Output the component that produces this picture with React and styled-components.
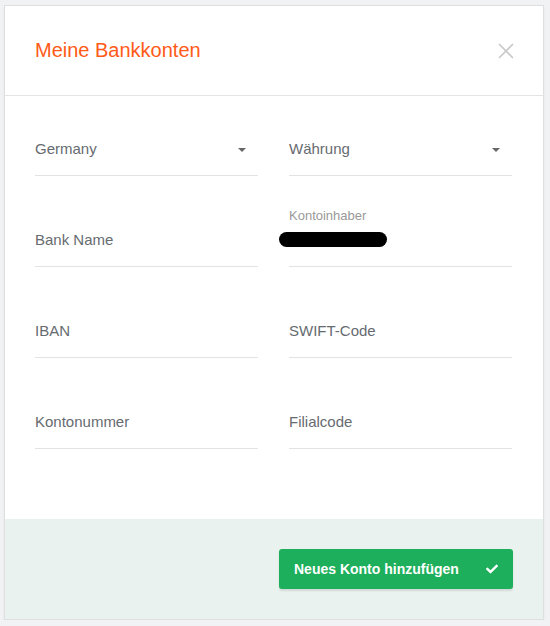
import React from "react";
import styled, { createGlobalStyle } from "styled-components";
import { FaCheck } from "react-icons/fa";

const GlobalStyle = createGlobalStyle`
  html, body {
    margin: 0;
    padding: 0;
    background: #f1f2f4;
    font-family: "Liberation Sans", Arial, sans-serif;
  }
  * { box-sizing: border-box; }
`;

const fields = [
  { label: "Germany", select: true },
  { label: "Währung", select: true },
  { label: "Bank Name" },
  { label: "Kontoinhaber", floating: true, redacted: true },
  { label: "IBAN" },
  { label: "SWIFT-Code" },
  { label: "Kontonummer" },
  { label: "Filialcode" },
];

const Field = ({ label, select, floating, redacted }) => (
  <StyledField>
    {floating && <StyledFloatingLabel>{label}</StyledFloatingLabel>}
    <StyledValueRow>
      {redacted ? <StyledRedacted /> : <StyledPlaceholder>{label}</StyledPlaceholder>}
      {select && <StyledCaret />}
    </StyledValueRow>
  </StyledField>
);

export default function App() {
  return (
    <>
      <GlobalStyle />
      <StyledCard>
        <StyledHeader>
          <StyledTitle>Meine Bankkonten</StyledTitle>
          <StyledClose aria-label="close">
            <svg width="16" height="16" viewBox="0 0 16 16">
              <path d="M1 1L15 15M15 1L1 15" stroke="#c8c8c8" strokeWidth="1.6" fill="none" />
            </svg>
          </StyledClose>
        </StyledHeader>
        <StyledBody>
          {fields.map((f) => (
            <Field key={f.label} {...f} />
          ))}
        </StyledBody>
        <StyledFooter>
          <StyledButton>
            Neues Konto hinzufügen
            <FaCheck size={12} />
          </StyledButton>
        </StyledFooter>
      </StyledCard>
    </>
  );
}

const StyledCard = styled.div`
  width: 540px;
  margin: 5px 0 0 4px;
  background: #fff;
  border: 1px solid #dedfe1;
  box-shadow: 0 2px 2px rgba(0, 0, 0, 0.06);
`;

const StyledHeader = styled.div`
  height: 90px;
  display: flex;
  align-items: center;
  justify-content: space-between;
  padding: 0 30px;
  border-bottom: 1px solid #e3e4e6;
`;

const StyledTitle = styled.h4`
  margin: 0;
  font-size: 20px;
  font-weight: 400;
  color: #ff5a17;
`;

const StyledClose = styled.button`
  border: 0;
  background: transparent;
  padding: 0;
  margin-right: -1px;
  display: flex;
  cursor: pointer;
`;

const StyledBody = styled.div`
  display: grid;
  grid-template-columns: 223px 223px;
  column-gap: 31px;
  row-gap: 11px;
  padding: 0 30px 70px;
`;

const StyledField = styled.div`
  height: 80px;
  display: flex;
  flex-direction: column;
  justify-content: flex-end;
  padding-bottom: 17px;
  border-bottom: 1px solid #e2e3e5;
  position: relative;
`;

const StyledFloatingLabel = styled.div`
  font-size: 13px;
  color: #999;
  margin-bottom: 6px;
`;

const StyledValueRow = styled.div`
  display: flex;
  align-items: center;
  justify-content: space-between;
  height: 20px;
`;

const StyledPlaceholder = styled.span`
  font-size: 15px;
  color: #666b70;
`;

const StyledRedacted = styled.span`
  display: block;
  width: 108px;
  height: 15px;
  margin-left: -10px;
  border-radius: 8px;
  background: #000;
`;

const StyledCaret = styled.span`
  width: 0;
  height: 0;
  margin-right: 12px;
  margin-top: 3px;
  border-left: 4px solid transparent;
  border-right: 4px solid transparent;
  border-top: 4px solid #666;
`;

const StyledFooter = styled.div`
  height: 100px;
  display: flex;
  align-items: center;
  justify-content: flex-end;
  padding: 0 30px;
  background: #eaf2ef;
`;

const StyledButton = styled.button`
  width: 234px;
  height: 40px;
  display: flex;
  align-items: center;
  justify-content: space-between;
  padding: 0 15px 0 15px;
  border: 0;
  border-radius: 3px;
  background: #1daf5b;
  color: #fff;
  font-family: "Liberation Sans", Arial, sans-serif;
  font-size: 14px;
  font-weight: 700;
  box-shadow: 0 2px 2px rgba(0, 0, 0, 0.1);
  cursor: pointer;
`;
